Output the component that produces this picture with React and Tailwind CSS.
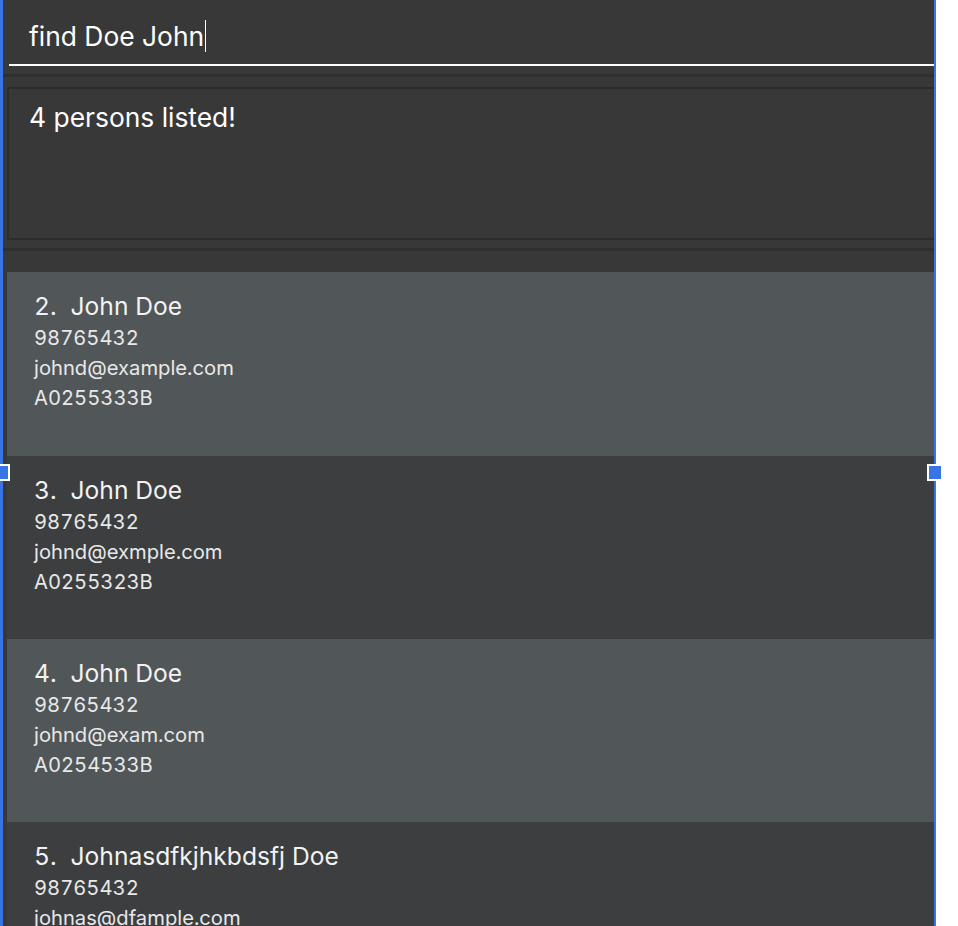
import React from "react";

const people = [
  { idx: 2, name: "John Doe", phone: "98765432", email: "johnd@example.com", id: "A0255333B" },
  { idx: 3, name: "John Doe", phone: "98765432", email: "johnd@exmple.com", id: "A0255323B" },
  { idx: 4, name: "John Doe", phone: "98765432", email: "johnd@exam.com", id: "A0254533B" },
  { idx: 5, name: "Johnasdfkjhkbdsfj Doe", phone: "98765432", email: "johnas@dfample.com", id: "A0255333B" },
];

function Card({ p, even, first }) {
  return (
    <div
      className={`${first ? "h-[184px]" : "h-[183px]"} shrink-0 pl-[27px] pt-[18px] ${even ? "bg-[#515658]" : "bg-[#3c3e40]"}`}
    >
      <div className="flex gap-[14px] text-[24.6px] leading-[32px] text-[#f2f2f2]">
        <span className="tabular-nums">{p.idx}.</span>
        <span>{p.name}</span>
      </div>
      <div className="mt-[1px] text-[20.2px] leading-[30px] text-[#e8e8e8] tabular-nums">
        <div>{p.phone}</div>
        <div>{p.email}</div>
        <div>{p.id}</div>
      </div>
    </div>
  );
}

export default function App() {
  return (
    <div
      className="relative w-[958px] h-[926px] overflow-hidden bg-white"
      style={{ fontFamily: "Inter, 'Noto Sans', sans-serif" }}
    >
      <div className="w-[936px] h-[926px] border-l-[3px] border-r-[2px] border-[#3874e3] bg-[#383838] flex flex-col overflow-hidden">
        {/* command box */}
        <div className="h-[64px] shrink-0 flex items-center pl-[26px] pt-[8px]">
          <span className="text-[26.4px] text-white leading-none">find Doe John</span>
          <span className="ml-[1px] w-[1px] h-[32px] bg-white" />
        </div>
        <div className="ml-[6px] h-[2px] bg-white shrink-0" />
        <div className="h-[8px] shrink-0" />
        <div className="h-[3px] bg-[#2f2f2f] shrink-0" />
        <div className="h-[10px] shrink-0" />
        {/* result display */}
        <div className="ml-[4px] h-[153px] shrink-0 border-[2px] border-r-0 border-[#2c2c2c] bg-[#383838] pl-[20px] pt-[12px]">
          <span className="text-[26.4px] leading-[32px] text-white">4 persons listed!</span>
        </div>
        <div className="h-[8px] shrink-0" />
        <div className="h-[3px] bg-[#2f2f2f] shrink-0" />
        <div className="h-[21px] shrink-0" />
        {/* list */}
        <div className="ml-[4px] flex flex-col">
          {people.map((p, i) => (
            <Card key={p.idx} p={p} even={i % 2 === 0} first={i === 0} />
          ))}
        </div>
      </div>
      {/* selection handles */}
      <div className="absolute left-[-6px] top-[464px] w-[16px] h-[17px] border-[2px] border-white bg-[#3874e3]" />
      <div className="absolute left-[927px] top-[464px] w-[16px] h-[17px] border-[2px] border-white bg-[#3874e3]" />
    </div>
  );
}
